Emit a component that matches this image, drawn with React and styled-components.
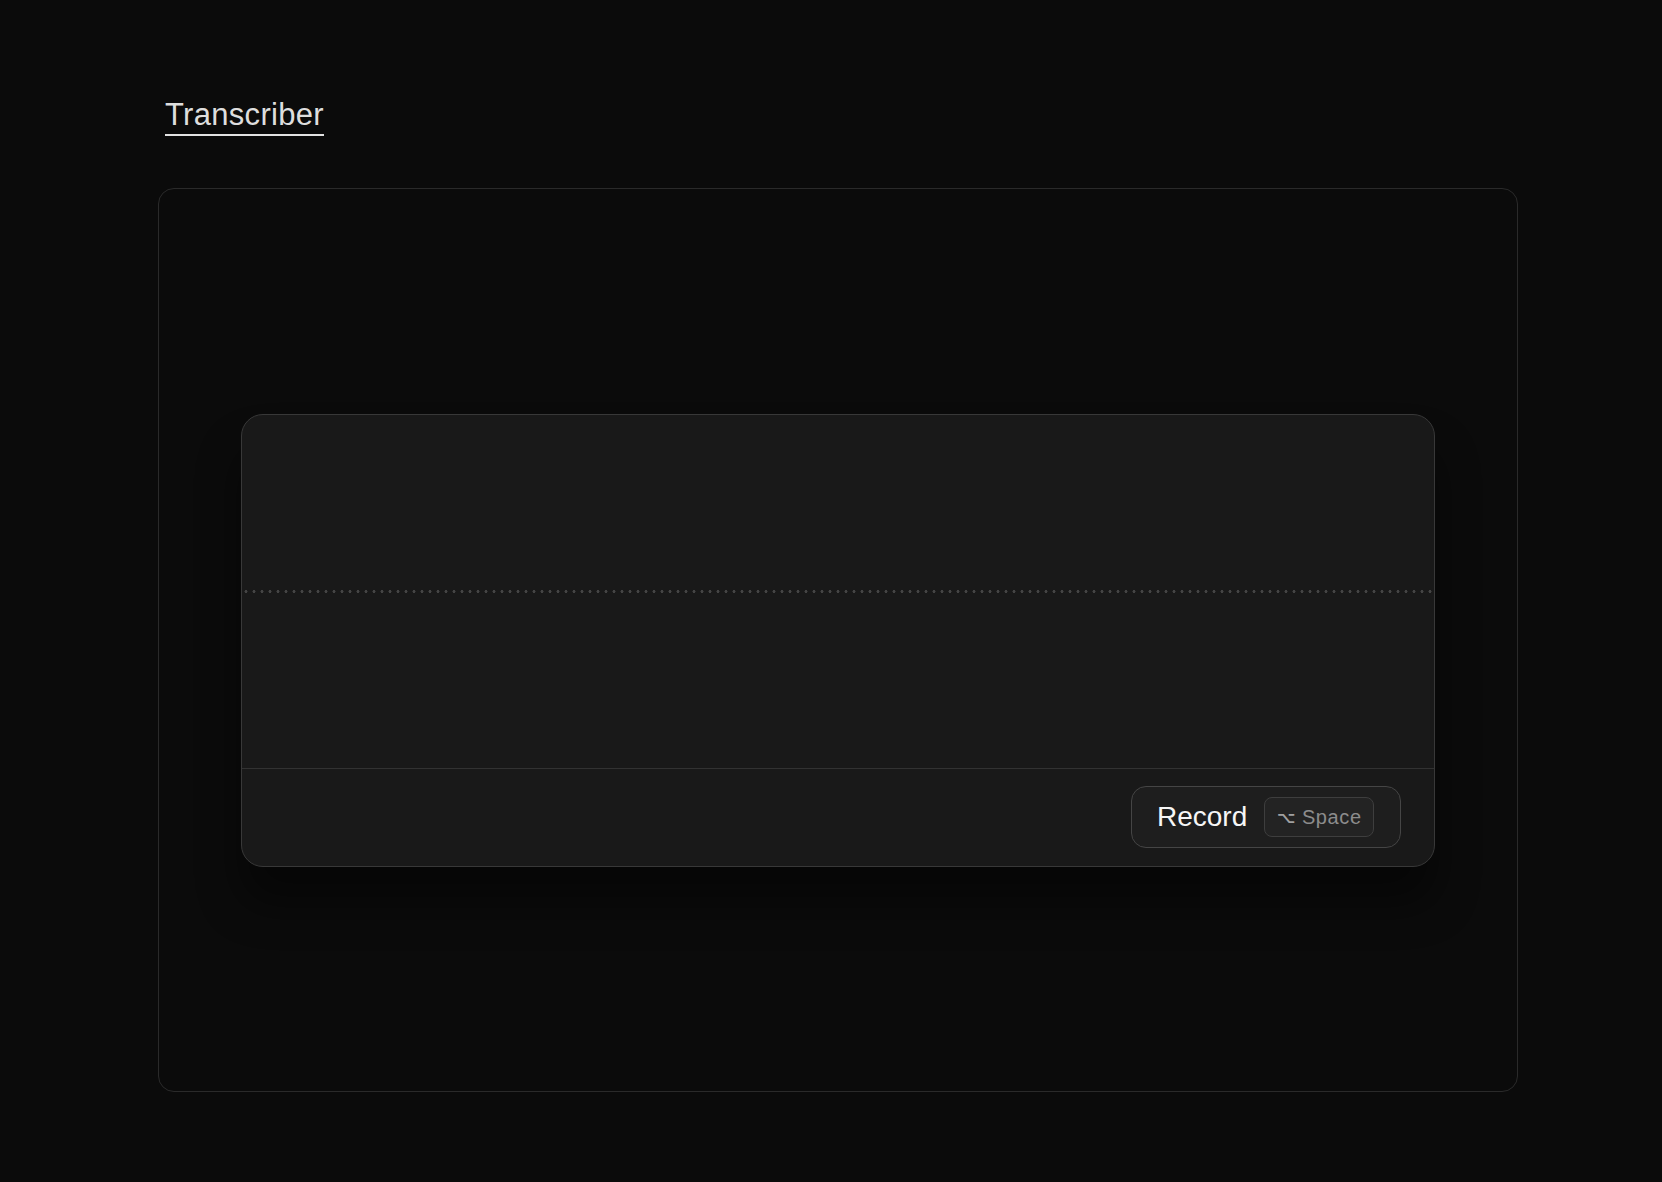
import React from "react"
import styled, { createGlobalStyle } from "styled-components"

const GlobalStyle = createGlobalStyle`
   html, body {
      margin: 0;
      padding: 0;
      background: #0b0b0b;
      font-family: "Liberation Sans", Arial, sans-serif;
   }
`

function App() {
   return (
      <Page>
         <GlobalStyle />
         <Header>
            <Title>Transcriber</Title>
         </Header>
         <Frame>
            <Recorder>
               <Wave>
                  <DottedLine />
               </Wave>
               <Footer>
                  <RecordButton>
                     Record
                     <Kbd>
                        <span className="key">⌥</span> Space
                     </Kbd>
                  </RecordButton>
               </Footer>
            </Recorder>
         </Frame>
      </Page>
   )
}

const Page = styled.div`
   min-height: 1182px;
   box-sizing: border-box;
   padding: 97px 0 0 158px;
`

const Header = styled.div`
   height: 91px;
   padding-left: 7px;
`

const Title = styled.h1`
   display: inline-block;
   margin: 0;
   font-size: 31px;
   font-weight: 400;
   color: #dedede;
   line-height: 35px;
   padding-bottom: 2px;
   border-bottom: 2px solid #e2e2e2;
   letter-spacing: 0.3px;
`

const Frame = styled.div`
   width: 1360px;
   height: 904px;
   box-sizing: border-box;
   border: 1px solid #2a2a2a;
   border-radius: 16px;
   display: flex;
   align-items: center;
   justify-content: center;
`

const Recorder = styled.div`
   width: 1194px;
   height: 453px;
   box-sizing: border-box;
   background: #191919;
   border: 1px solid #383838;
   border-radius: 22px;
   display: flex;
   flex-direction: column;
   overflow: hidden;
   box-shadow: 0 36px 44px rgba(0, 0, 0, 0.45);
`

const Wave = styled.div`
   flex: 1;
   display: flex;
   align-items: center;
   border-bottom: 1px solid #323232;
`

const DottedLine = styled.div`
   width: 100%;
   height: 3px;
   background-image: radial-gradient(circle, #444444 1.3px, transparent 1.7px);
   background-size: 8px 3px;
   background-position: 0 0;
`

const Footer = styled.div`
   height: 97px;
   display: flex;
   align-items: center;
   justify-content: flex-end;
   padding-right: 33px;
`

const RecordButton = styled.button`
   display: flex;
   align-items: center;
   gap: 17px;
   height: 62px;
   width: 270px;
   box-sizing: border-box;
   padding: 0 23px 0 25px;
   background: #1e1e1e;
   border: 1.5px solid #454545;
   border-radius: 15px;
   color: #f6f6f6;
   font-family: "Liberation Sans", Arial, sans-serif;
   font-size: 28px;
   cursor: pointer;
`

const Kbd = styled.span`
   display: flex;
   align-items: center;
   justify-content: center;
   gap: 6px;
   height: 40px;
   width: 110px;
   box-sizing: border-box;
   border: 1px solid #3e3e3e;
   border-radius: 8px;
   background: #232323;
   color: #8c8c8c;
   font-size: 20px;
   letter-spacing: 0.6px;
   .key {
      font-family: "DejaVu Sans", sans-serif;
      font-size: 16px;
      font-weight: 700;
      color: #a0a0a0;
   }
`

export default App
